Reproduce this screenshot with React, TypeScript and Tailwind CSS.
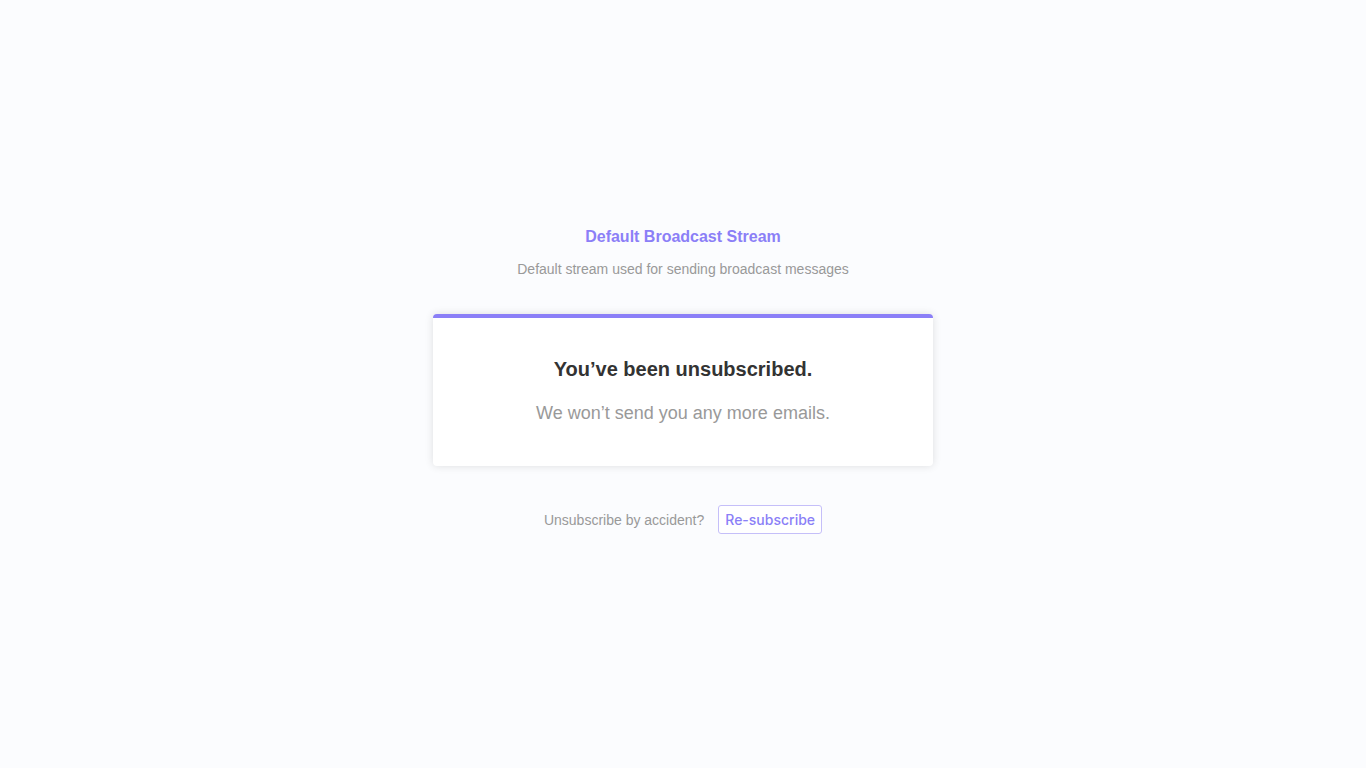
export default function App() {
  return (
    <main className="flex min-h-screen flex-col items-center justify-center bg-[#fbfcfe] px-4 pb-[7px] text-center font-['Liberation_Sans',Arial,sans-serif] text-sm text-[#999999]">
      <header>
        <h1 className="text-base leading-5 font-bold text-[#8b7ff7]">Default Broadcast Stream</h1>
        <p className="mt-3 leading-5">Default stream used for sending broadcast messages</p>
      </header>
      <section className="mt-[35px] w-full max-w-[500px] rounded border-t-4 border-[#8b7ff7] bg-white px-6 pt-[39px] pb-[41px] shadow-[0_0_8px_rgba(0,0,0,0.12)]">
        <h2 className="text-xl leading-6 font-bold text-[#333333]">You’ve been unsubscribed.</h2>
        <p className="mt-5 text-lg leading-6">We won’t send you any more emails.</p>
      </section>
      <form className="mt-[39px] flex items-center gap-3.5" onSubmit={(e) => e.preventDefault()}>
        <span>Unsubscribe by accident?</span>
        <button
          type="submit"
          className="cursor-pointer rounded-[3px] border border-[#c5bff9] bg-white px-1.5 pt-1 pb-[3px] font-['Inter',sans-serif] text-sm leading-5 font-medium text-[#8b7ff7]"
        >
          Re-subscribe
        </button>
      </form>
    </main>
  );
}
